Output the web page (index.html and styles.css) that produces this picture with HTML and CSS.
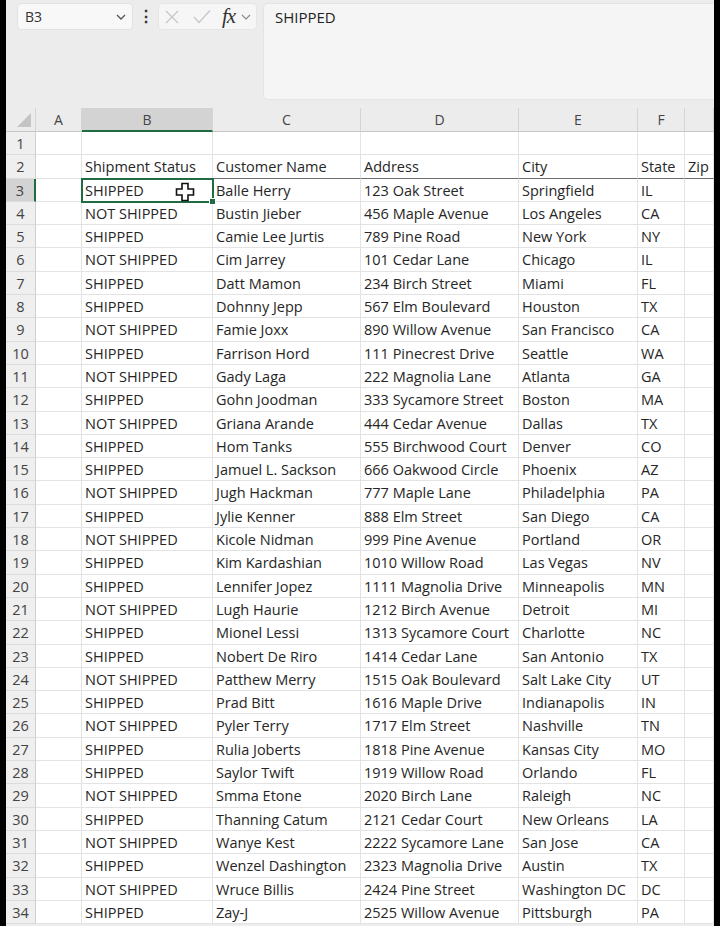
FILE: index.html
```html
<!DOCTYPE html>
<html>
<head>
<meta charset="utf-8">
<link rel="stylesheet" href="styles.css">
</head>
<body>
<div class="sheet">
  <div class="toolbar">
    <div class="namebox"><span class="ref">B3</span><svg class="chev" width="10" height="6" viewBox="0 0 10 6"><path d="M1 1 L5 5 L9 1" fill="none" stroke="#555" stroke-width="1.3"/></svg></div>
    <div class="dots">⋮</div>
    <div class="fxbox">
      <svg width="14" height="14" viewBox="0 0 14 14"><path d="M1 1 L13 13 M13 1 L1 13" stroke="#c8c8c8" stroke-width="1.4" fill="none"/></svg>
      <svg class="check" width="18" height="15" viewBox="0 0 18 15"><path d="M1 8 L6 13.5 L17 1.5" stroke="#c8c8c8" stroke-width="1.4" fill="none"/></svg>
      <span class="fx">fx</span>
      <svg class="chev2" width="10" height="6" viewBox="0 0 10 6"><path d="M1 1 L5 5 L9 1" fill="none" stroke="#888" stroke-width="1.1"/></svg>
    </div>
    <div class="formula">SHIPPED</div>
  </div>
  <div class="grid">
    <div class="corner"><svg width="14" height="14" viewBox="0 0 14 14"><path d="M14 0 L14 14 L0 14 Z" fill="#c4c4c4"/></svg></div>
    <div class="ch">A</div><div class="ch on">B</div><div class="ch">C</div><div class="ch">D</div><div class="ch">E</div><div class="ch">F</div><div class="ch"></div>

    <div class="rh">1</div><div class="c"></div><div class="c"></div><div class="c"></div><div class="c"></div><div class="c"></div><div class="c"></div><div class="c"></div>
    <div class="rh">2</div><div class="c"></div><div class="c hd">Shipment Status</div><div class="c hd">Customer Name</div><div class="c hd">Address</div><div class="c hd">City</div><div class="c hd">State</div><div class="c hd">Zip</div>
    <div class="rh on">3</div><div class="c"></div><div class="c sel">SHIPPED<svg class="cursor" width="20" height="20" viewBox="0 0 20 20"><path d="M7 1.5 H13 V7 H18.5 V13 H13 V18.5 H7 V13 H1.5 V7 H7 Z" fill="#fff" stroke="#111" stroke-width="1.6"/></svg></div><div class="c">Balle Herry</div><div class="c">123 Oak Street</div><div class="c">Springfield</div><div class="c">IL</div><div class="c"></div>
    <div class="rh">4</div><div class="c"></div><div class="c">NOT SHIPPED</div><div class="c">Bustin Jieber</div><div class="c">456 Maple Avenue</div><div class="c">Los Angeles</div><div class="c">CA</div><div class="c"></div>
    <div class="rh">5</div><div class="c"></div><div class="c">SHIPPED</div><div class="c">Camie Lee Jurtis</div><div class="c">789 Pine Road</div><div class="c">New York</div><div class="c">NY</div><div class="c"></div>
    <div class="rh">6</div><div class="c"></div><div class="c">NOT SHIPPED</div><div class="c">Cim Jarrey</div><div class="c">101 Cedar Lane</div><div class="c">Chicago</div><div class="c">IL</div><div class="c"></div>
    <div class="rh">7</div><div class="c"></div><div class="c">SHIPPED</div><div class="c">Datt Mamon</div><div class="c">234 Birch Street</div><div class="c">Miami</div><div class="c">FL</div><div class="c"></div>
    <div class="rh">8</div><div class="c"></div><div class="c">SHIPPED</div><div class="c">Dohnny Jepp</div><div class="c">567 Elm Boulevard</div><div class="c">Houston</div><div class="c">TX</div><div class="c"></div>
    <div class="rh">9</div><div class="c"></div><div class="c">NOT SHIPPED</div><div class="c">Famie Joxx</div><div class="c">890 Willow Avenue</div><div class="c">San Francisco</div><div class="c">CA</div><div class="c"></div>
    <div class="rh">10</div><div class="c"></div><div class="c">SHIPPED</div><div class="c">Farrison Hord</div><div class="c">111 Pinecrest Drive</div><div class="c">Seattle</div><div class="c">WA</div><div class="c"></div>
    <div class="rh">11</div><div class="c"></div><div class="c">NOT SHIPPED</div><div class="c">Gady Laga</div><div class="c">222 Magnolia Lane</div><div class="c">Atlanta</div><div class="c">GA</div><div class="c"></div>
    <div class="rh">12</div><div class="c"></div><div class="c">SHIPPED</div><div class="c">Gohn Joodman</div><div class="c">333 Sycamore Street</div><div class="c">Boston</div><div class="c">MA</div><div class="c"></div>
    <div class="rh">13</div><div class="c"></div><div class="c">NOT SHIPPED</div><div class="c">Griana Arande</div><div class="c">444 Cedar Avenue</div><div class="c">Dallas</div><div class="c">TX</div><div class="c"></div>
    <div class="rh">14</div><div class="c"></div><div class="c">SHIPPED</div><div class="c">Hom Tanks</div><div class="c">555 Birchwood Court</div><div class="c">Denver</div><div class="c">CO</div><div class="c"></div>
    <div class="rh">15</div><div class="c"></div><div class="c">SHIPPED</div><div class="c">Jamuel L. Sackson</div><div class="c">666 Oakwood Circle</div><div class="c">Phoenix</div><div class="c">AZ</div><div class="c"></div>
    <div class="rh">16</div><div class="c"></div><div class="c">NOT SHIPPED</div><div class="c">Jugh Hackman</div><div class="c">777 Maple Lane</div><div class="c">Philadelphia</div><div class="c">PA</div><div class="c"></div>
    <div class="rh">17</div><div class="c"></div><div class="c">SHIPPED</div><div class="c">Jylie Kenner</div><div class="c">888 Elm Street</div><div class="c">San Diego</div><div class="c">CA</div><div class="c"></div>
    <div class="rh">18</div><div class="c"></div><div class="c">NOT SHIPPED</div><div class="c">Kicole Nidman</div><div class="c">999 Pine Avenue</div><div class="c">Portland</div><div class="c">OR</div><div class="c"></div>
    <div class="rh">19</div><div class="c"></div><div class="c">SHIPPED</div><div class="c">Kim Kardashian</div><div class="c">1010 Willow Road</div><div class="c">Las Vegas</div><div class="c">NV</div><div class="c"></div>
    <div class="rh">20</div><div class="c"></div><div class="c">SHIPPED</div><div class="c">Lennifer Jopez</div><div class="c">1111 Magnolia Drive</div><div class="c">Minneapolis</div><div class="c">MN</div><div class="c"></div>
    <div class="rh">21</div><div class="c"></div><div class="c">NOT SHIPPED</div><div class="c">Lugh Haurie</div><div class="c">1212 Birch Avenue</div><div class="c">Detroit</div><div class="c">MI</div><div class="c"></div>
    <div class="rh">22</div><div class="c"></div><div class="c">SHIPPED</div><div class="c">Mionel Lessi</div><div class="c">1313 Sycamore Court</div><div class="c">Charlotte</div><div class="c">NC</div><div class="c"></div>
    <div class="rh">23</div><div class="c"></div><div class="c">SHIPPED</div><div class="c">Nobert De Riro</div><div class="c">1414 Cedar Lane</div><div class="c">San Antonio</div><div class="c">TX</div><div class="c"></div>
    <div class="rh">24</div><div class="c"></div><div class="c">NOT SHIPPED</div><div class="c">Patthew Merry</div><div class="c">1515 Oak Boulevard</div><div class="c">Salt Lake City</div><div class="c">UT</div><div class="c"></div>
    <div class="rh">25</div><div class="c"></div><div class="c">SHIPPED</div><div class="c">Prad Bitt</div><div class="c">1616 Maple Drive</div><div class="c">Indianapolis</div><div class="c">IN</div><div class="c"></div>
    <div class="rh">26</div><div class="c"></div><div class="c">NOT SHIPPED</div><div class="c">Pyler Terry</div><div class="c">1717 Elm Street</div><div class="c">Nashville</div><div class="c">TN</div><div class="c"></div>
    <div class="rh">27</div><div class="c"></div><div class="c">SHIPPED</div><div class="c">Rulia Joberts</div><div class="c">1818 Pine Avenue</div><div class="c">Kansas City</div><div class="c">MO</div><div class="c"></div>
    <div class="rh">28</div><div class="c"></div><div class="c">SHIPPED</div><div class="c">Saylor Twift</div><div class="c">1919 Willow Road</div><div class="c">Orlando</div><div class="c">FL</div><div class="c"></div>
    <div class="rh">29</div><div class="c"></div><div class="c">NOT SHIPPED</div><div class="c">Smma Etone</div><div class="c">2020 Birch Lane</div><div class="c">Raleigh</div><div class="c">NC</div><div class="c"></div>
    <div class="rh">30</div><div class="c"></div><div class="c">SHIPPED</div><div class="c">Thanning Catum</div><div class="c">2121 Cedar Court</div><div class="c">New Orleans</div><div class="c">LA</div><div class="c"></div>
    <div class="rh">31</div><div class="c"></div><div class="c">NOT SHIPPED</div><div class="c">Wanye Kest</div><div class="c">2222 Sycamore Lane</div><div class="c">San Jose</div><div class="c">CA</div><div class="c"></div>
    <div class="rh">32</div><div class="c"></div><div class="c">SHIPPED</div><div class="c">Wenzel Dashington</div><div class="c">2323 Magnolia Drive</div><div class="c">Austin</div><div class="c">TX</div><div class="c"></div>
    <div class="rh">33</div><div class="c"></div><div class="c">NOT SHIPPED</div><div class="c">Wruce Billis</div><div class="c">2424 Pine Street</div><div class="c">Washington DC</div><div class="c">DC</div><div class="c"></div>
    <div class="rh">34</div><div class="c"></div><div class="c">SHIPPED</div><div class="c">Zay-J</div><div class="c">2525 Willow Avenue</div><div class="c">Pittsburgh</div><div class="c">PA</div><div class="c"></div>
  </div>
</div>
</body>
</html>
```

FILE: styles.css
```css
html, body {
  margin: 0;
  padding: 0;
  background: #000;
  height: 926px;
  overflow: hidden;
}
.sheet {
  margin-left: 6px;
  width: 708px;
  height: 926px;
  background: #ededed;
  font-family: "Open Sans", "Noto Sans", sans-serif;
  color: #262626;
}
.toolbar {
  height: 108px;
  display: flex;
  align-items: flex-start;
  padding-top: 3px;
  box-sizing: border-box;
  background: #ececec;
}
.namebox {
  margin-left: 11px;
  width: 116px;
  height: 27px;
  box-sizing: border-box;
  background: #f8f8f8;
  border: 1px solid #e2e2e2;
  border-radius: 4px;
  display: flex;
  align-items: center;
  justify-content: space-between;
  padding: 0 6px 0 7px;
  font-size: 14px;
  color: #333;
}
.dots {
  width: 25px;
  text-align: center;
  font-size: 16px;
  line-height: 27px;
  color: #333;
  font-weight: bold;
}
.fxbox {
  width: 99px;
  height: 27px;
  box-sizing: border-box;
  background: #f6f6f6;
  border: 1px solid #e6e6e6;
  border-radius: 4px;
  display: flex;
  align-items: center;
  padding-left: 6px;
}
.check { margin-left: 14px; }
.fx {
  font-family: "Liberation Serif", serif;
  font-style: italic;
  font-size: 21px;
  color: #333;
  margin-left: 11px;
  line-height: 1;
  letter-spacing: -1px;
}
.chev2 { margin-left: 6px; }
.formula {
  margin-left: 6px;
  flex: 1;
  height: 97px;
  box-sizing: border-box;
  background: #f5f5f5;
  border: 1px solid #e4e4e4;
  border-right: none;
  border-radius: 5px 0 0 5px;
  padding: 3px 0 0 11px;
  font-size: 15px;
  color: #222;
}
.grid {
  display: grid;
  grid-template-columns: 30px 46px 131px 148px 158px 119px 47px 29px;
  grid-template-rows: 24px;
  grid-auto-rows: 23.3px;
  background: #fff;
}
.grid > div {
  box-sizing: border-box;
  overflow: visible;
  white-space: nowrap;
}
.corner {
  background: #ececec;
  border-right: 1px solid #d4d4d4;
  border-bottom: 1px solid #c6c6c6;
  display: flex;
  align-items: flex-end;
  justify-content: flex-end;
  padding: 0 4px 4px 0;
}
.ch {
  background: #ececec;
  border-right: 1px solid #d4d4d4;
  border-bottom: 1px solid #c6c6c6;
  text-align: center;
  font-size: 14px;
  line-height: 24px;
  color: #444;
}
.ch.on {
  background: #d3d3d3;
  border-bottom: 2px solid #1f6b43;
}
.rh {
  background: #efefef;
  border-right: 1px solid #cfcfcf;
  border-bottom: 1px solid #dcdcdc;
  text-align: center;
  font-size: 14.5px;
  line-height: 24px;
  color: #444;
}
.rh.on {
  background: #d3d3d3;
  border-right: 2px solid #1f6b43;
}
.c {
  border-right: 1px solid #e3e3e3;
  border-bottom: 1px solid #e3e3e3;
  padding-left: 3px;
  font-size: 14.5px;
  line-height: 24px;
  color: #262626;
}
.c.hd {
  border-bottom: 1px solid #6b6b6b;
}
.sel {
  position: relative;
  outline: 2px solid #1f6b43;
  outline-offset: -1px;
  z-index: 2;
}
.sel::after {
  content: "";
  position: absolute;
  right: -4px;
  bottom: -4px;
  width: 5px;
  height: 5px;
  background: #1f6b43;
  border: 1px solid #fff;
}
.cursor {
  position: absolute;
  left: 93px;
  top: 3px;
}
```
